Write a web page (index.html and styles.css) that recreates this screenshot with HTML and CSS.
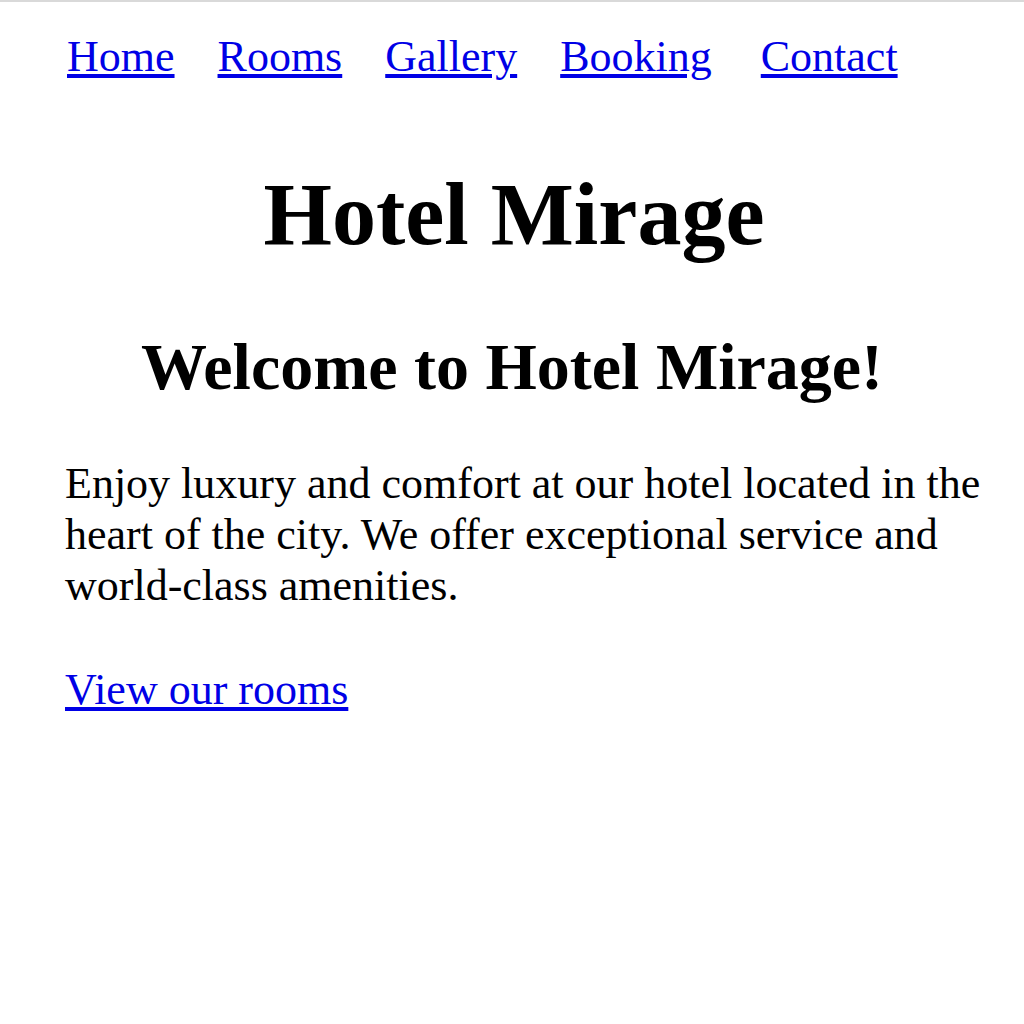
FILE: index.html
```html
<!DOCTYPE html>
<html lang="en">
<head>
<meta charset="utf-8">
<title>Hotel Mirage</title>
<link rel="stylesheet" href="styles.css">
</head>
<body>
<header class="site-header">
  <nav class="main-nav">
    <ul class="nav-list">
      <li class="nav-item"><a href="#">Home</a></li>
      <li class="nav-item"><a href="#">Rooms</a></li>
      <li class="nav-item"><a href="#">Gallery</a></li>
      <li class="nav-item"><a href="#">Booking</a></li>
      <li class="nav-item nav-item-last"><a href="#">Contact</a></li>
    </ul>
  </nav>
  <h1 class="site-title">Hotel Mirage</h1>
</header>
<main class="content">
  <h2 class="welcome">Welcome to Hotel Mirage!</h2>
  <p class="intro">Enjoy luxury and comfort at our hotel located in the heart of the city. We offer exceptional service and world-class amenities.</p>
  <p class="cta"><a href="#">View our rooms</a></p>
</main>
</body>
</html>
```
FILE: styles.css
```css
html {
  background: #ffffff;
}
body {
  margin: 0;
  border-top: 2px solid #d9d9d9;
  font-family: "Liberation Serif", "Times New Roman", serif;
  font-size: 44px;
  color: #000000;
  background: #ffffff;
}
a {
  color: #0000e6;
}
.main-nav {
  padding: 29px 40px 0 65px;
}
.nav-list {
  list-style: none;
  margin: 0;
  padding: 0 0 0 2px;
  display: flex;
  gap: 43px;
}
.nav-item-last {
  margin-left: 6px;
}
.site-title {
  font-size: 88px;
  text-align: center;
  margin: 82px 0 0;
  padding-left: 4px;
}
.welcome {
  font-size: 66px;
  text-align: center;
  margin: 64px 0 0;
}
.intro {
  margin: 53px 0 0;
  padding: 0 40px 0 65px;
}
.cta {
  margin: 53px 0 0;
  padding: 0 40px 0 65px;
}
```
